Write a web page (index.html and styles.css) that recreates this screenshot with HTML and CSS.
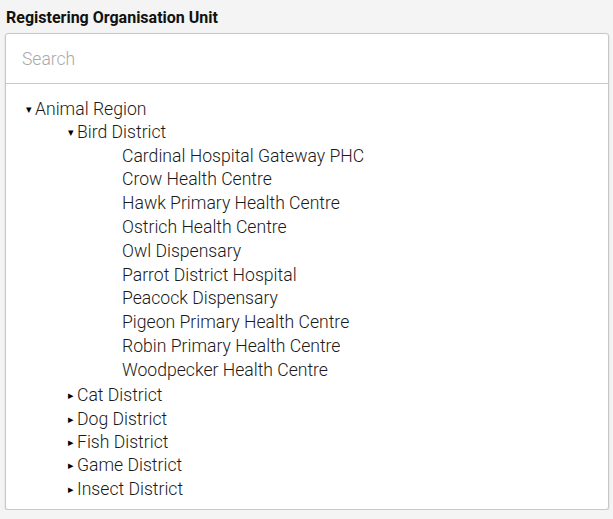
FILE: index.html
```html
<!DOCTYPE html>
<html>
<head>
<meta charset="utf-8">
<link rel="stylesheet" href="styles.css">
</head>
<body>
<div class="field">
  <div class="label">Registering Organisation Unit</div>
  <div class="panel">
    <div class="search"><input class="search-input" type="text" placeholder="Search"></div>
    <ul class="tree">
      <li class="node"><div class="row"><span class="arrow">&#9662;</span><span class="name">Animal Region</span></div>
        <ul class="tree sub">
          <li class="node"><div class="row"><span class="arrow">&#9662;</span><span class="name">Bird District</span></div>
            <ul class="tree leaves">
              <li class="row">Cardinal Hospital Gateway PHC</li>
              <li class="row">Crow Health Centre</li>
              <li class="row">Hawk Primary Health Centre</li>
              <li class="row">Ostrich Health Centre</li>
              <li class="row">Owl Dispensary</li>
              <li class="row">Parrot District Hospital</li>
              <li class="row">Peacock Dispensary</li>
              <li class="row">Pigeon Primary Health Centre</li>
              <li class="row">Robin Primary Health Centre</li>
              <li class="row">Woodpecker Health Centre</li>
            </ul>
          </li>
          <li class="node"><div class="row"><span class="arrow">&#9656;</span><span class="name">Cat District</span></div></li>
          <li class="node"><div class="row"><span class="arrow">&#9656;</span><span class="name">Dog District</span></div></li>
          <li class="node"><div class="row"><span class="arrow">&#9656;</span><span class="name">Fish District</span></div></li>
          <li class="node"><div class="row"><span class="arrow">&#9656;</span><span class="name">Game District</span></div></li>
          <li class="node"><div class="row"><span class="arrow">&#9656;</span><span class="name">Insect District</span></div></li>
        </ul>
      </li>
    </ul>
  </div>
</div>
</body>
</html>
```

FILE: styles.css
```css
html, body {
  margin: 0;
  padding: 0;
  background: #f4f4f4;
  font-family: Roboto, "Liberation Sans", sans-serif;
}
.field {
  padding: 7px 4px 0 5px;
}
.label {
  font-size: 16px;
  font-weight: 700;
  color: #111;
  padding-left: 1px;
  line-height: 22px;
  margin-bottom: 4px;
}
.panel {
  width: 602px;
  background: #fff;
  border: 1px solid #c8c8c8;
  border-radius: 3px;
  box-shadow: 0 1px 2px rgba(0,0,0,0.15);
  padding-bottom: 8px;
}
.search {
  height: 49px;
  border-bottom: 1px solid #c8c8c8;
  display: flex;
  align-items: center;
}
.search-input {
  border: none;
  outline: none;
  background: transparent;
  font-family: Roboto, "Liberation Sans", sans-serif;
  font-size: 17.5px;
  font-weight: 300;
  padding: 1px 0 0 16px;
  width: 100%;
  color: #222;
}
.search-input::placeholder {
  color: #a9a9a9;
}
.tree {
  list-style: none;
  margin: 0;
  padding: 14px 0 0 20px;
  font-size: 17.6px;
  font-weight: 300;
  color: #1a1a1a;
}
.tree.sub {
  padding: 0 0 0 42px;
}
.tree.leaves {
  padding: 0 0 0 54px;
  margin-bottom: 1.5px;
}
.row {
  height: 23.35px;
  line-height: 23.35px;
  white-space: nowrap;
}
.leaves .row {
  height: 23.8px;
  line-height: 23.8px;
}
.arrow {
  display: inline-block;
  width: 9px;
  font-size: 11px;
  line-height: 10px;
  color: #000;
  vertical-align: 2px;
}
```
